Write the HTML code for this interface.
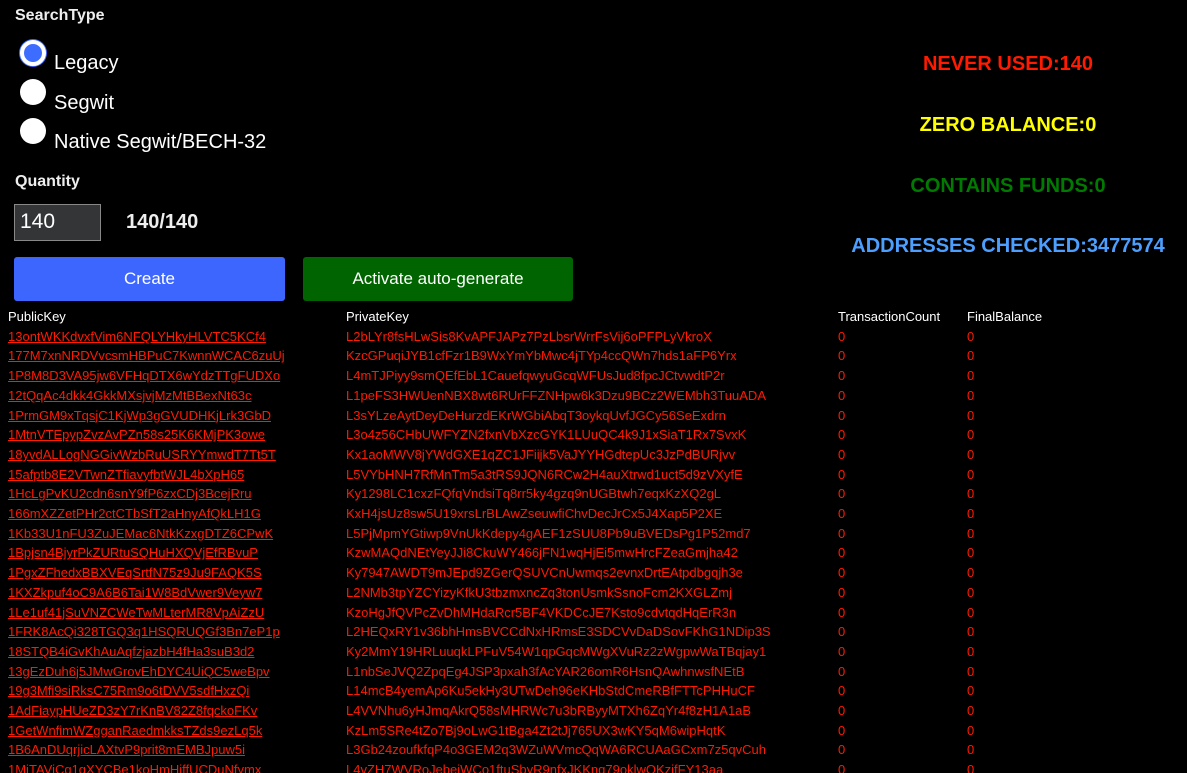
<!DOCTYPE html>
<html><head><meta charset="utf-8">
<style>
html,body{margin:0;padding:0;background:#000;width:1187px;height:773px;overflow:hidden;}
body{font-family:"Liberation Sans","DejaVu Sans",sans-serif;color:#fff;position:relative;}
.a{position:absolute;white-space:nowrap;}
.lbl{font-size:16px;font-weight:bold;color:#eee;}
.radio{position:absolute;width:26px;height:26px;border-radius:50%;background:#fff;left:20px;}
.rt{font-size:20px;color:#fff;}
.stat{position:absolute;left:830px;width:356px;text-align:center;font-size:20px;font-weight:bold;}
table{position:absolute;left:0;top:307px;border-collapse:collapse;font-size:13px;}
td,th{padding:0 0 0 8px;height:19.7px;line-height:19.7px;text-align:left;font-weight:normal;white-space:nowrap;}
th{color:#fff;}
td{color:#ff1a00;}
td a{color:#ff1a00;text-decoration:underline;}
</style></head><body>
<div class="a lbl" style="left:15px;top:7px;">SearchType</div>
<div class="radio" style="top:40px;background:#3d6dff;border:4px solid #fff;width:18px;height:18px;box-shadow:0 0 0 1px #3d6dff;"></div>
<div class="a rt" style="left:54px;top:52px;">Legacy</div>
<div class="radio" style="top:79px;"></div>
<div class="a rt" style="left:54px;top:92px;">Segwit</div>
<div class="radio" style="top:118px;"></div>
<div class="a rt" style="left:54px;top:131px;">Native Segwit/BECH-32</div>
<div class="a lbl" style="left:15px;top:173px;">Quantity</div>
<div class="a" style="left:14px;top:204px;width:85px;height:35px;background:#333537;border:1px solid #888;font-size:21px;line-height:34px;"><span style="padding-left:5px">140</span></div>
<div class="a" style="left:126px;top:211px;font-size:20px;font-weight:bold;color:#eee;">140/140</div>
<div class="a" style="left:14px;top:257px;width:271px;height:44px;background:#3d66ff;border-radius:3px;text-align:center;line-height:44px;font-size:17px;">Create</div>
<div class="a" style="left:303px;top:257px;width:270px;height:44px;background:#006400;border-radius:3px;text-align:center;line-height:44px;font-size:17px;">Activate auto-generate</div>
<div class="stat" style="top:53px;color:#ff1a00;">NEVER USED:140</div>
<div class="stat" style="top:114px;color:#ffff00;">ZERO BALANCE:0</div>
<div class="stat" style="top:175px;color:#007a00;">CONTAINS FUNDS:0</div>
<div class="stat" style="top:235px;color:#4d9fff;">ADDRESSES CHECKED:3477574</div>
<table>
<tr><th style="width:330px">PublicKey</th><th style="width:484px">PrivateKey</th><th style="width:121px">TransactionCount</th><th>FinalBalance</th></tr>
<tr><td><a>13ontWKKdvxfVim6NFQLYHkyHLVTC5KCf4</a></td><td>L2bLYr8fsHLwSis8KvAPFJAPz7PzLbsrWrrFsVij6oPFPLyVkroX</td><td>0</td><td>0</td></tr>
<tr><td><a>177M7xnNRDVvcsmHBPuC7KwnnWCAC6zuUj</a></td><td>KzcGPuqiJYB1cfFzr1B9WxYmYbMwc4jTYp4ccQWn7hds1aFP6Yrx</td><td>0</td><td>0</td></tr>
<tr><td><a>1P8M8D3VA95jw6VFHqDTX6wYdzTTgFUDXo</a></td><td>L4mTJPiyy9smQEfEbL1CauefqwyuGcqWFUsJud8fpcJCtvwdtP2r</td><td>0</td><td>0</td></tr>
<tr><td><a>12tQqAc4dkk4GkkMXsjvjMzMtBBexNt63c</a></td><td>L1peFS3HWUenNBX8wt6RUrFFZNHpw6k3Dzu9BCz2WEMbh3TuuADA</td><td>0</td><td>0</td></tr>
<tr><td><a>1PrmGM9xTqsjC1KjWp3gGVUDHKjLrk3GbD</a></td><td>L3sYLzeAytDeyDeHurzdEKrWGbiAbqT3oykqUvfJGCy56SeExdrn</td><td>0</td><td>0</td></tr>
<tr><td><a>1MtnVTEpypZvzAvPZn58s25K6KMjPK3owe</a></td><td>L3o4z56CHbUWFYZN2fxnVbXzcGYK1LUuQC4k9J1xSiaT1Rx7SvxK</td><td>0</td><td>0</td></tr>
<tr><td><a>18yvdALLogNGGivWzbRuUSRYYmwdT7Tt5T</a></td><td>Kx1aoMWV8jYWdGXE1qZC1JFiijk5VaJYYHGdtepUc3JzPdBURjvv</td><td>0</td><td>0</td></tr>
<tr><td><a>15afptb8E2VTwnZTfiavyfbtWJL4bXpH65</a></td><td>L5VYbHNH7RfMnTm5a3tRS9JQN6RCw2H4auXtrwd1uct5d9zVXyfE</td><td>0</td><td>0</td></tr>
<tr><td><a>1HcLgPvKU2cdn6snY9fP6zxCDj3BcejRru</a></td><td>Ky1298LC1cxzFQfqVndsiTq8rr5ky4gzq9nUGBtwh7eqxKzXQ2gL</td><td>0</td><td>0</td></tr>
<tr><td><a>166mXZZetPHr2ctCTbSfT2aHnyAfQkLH1G</a></td><td>KxH4jsUz8sw5U19xrsLrBLAwZseuwfiChvDecJrCx5J4Xap5P2XE</td><td>0</td><td>0</td></tr>
<tr><td><a>1Kb33U1nFU3ZuJEMac6NtkKzxgDTZ6CPwK</a></td><td>L5PjMpmYGtiwp9VnUkKdepy4gAEF1zSUU8Pb9uBVEDsPg1P52md7</td><td>0</td><td>0</td></tr>
<tr><td><a>1Bpjsn4BjyrPkZURtuSQHuHXQVjEfRBvuP</a></td><td>KzwMAQdNEtYeyJJi8CkuWY466jFN1wqHjEi5mwHrcFZeaGmjha42</td><td>0</td><td>0</td></tr>
<tr><td><a>1PgxZFhedxBBXVEqSrtfN75z9Ju9FAQK5S</a></td><td>Ky7947AWDT9mJEpd9ZGerQSUVCnUwmqs2evnxDrtEAtpdbgqjh3e</td><td>0</td><td>0</td></tr>
<tr><td><a>1KXZkpuf4oC9A6B6Tai1W8BdVwer9Veyw7</a></td><td>L2NMb3tpYZCYizyKfkU3tbzmxncZq3tonUsmkSsnoFcm2KXGLZmj</td><td>0</td><td>0</td></tr>
<tr><td><a>1Le1uf41jSuVNZCWeTwMLterMR8VpAiZzU</a></td><td>KzoHgJfQVPcZvDhMHdaRcr5BF4VKDCcJE7Ksto9cdvtqdHqErR3n</td><td>0</td><td>0</td></tr>
<tr><td><a>1FRK8AcQi328TGQ3q1HSQRUQGf3Bn7eP1p</a></td><td>L2HEQxRY1v36bhHmsBVCCdNxHRmsE3SDCVvDaDSovFKhG1NDip3S</td><td>0</td><td>0</td></tr>
<tr><td><a>18STQB4iGvKhAuAqfzjazbH4fHa3suB3d2</a></td><td>Ky2MmY19HRLuuqkLPFuV54W1qpGqcMWgXVuRz2zWgpwWaTBqjay1</td><td>0</td><td>0</td></tr>
<tr><td><a>13gEzDuh6j5JMwGrovEhDYC4UiQC5weBpv</a></td><td>L1nbSeJVQ2ZpqEg4JSP3pxah3fAcYAR26omR6HsnQAwhnwsfNEtB</td><td>0</td><td>0</td></tr>
<tr><td><a>19g3Mfi9siRksC75Rm9o6tDVV5sdfHxzQi</a></td><td>L14mcB4yemAp6Ku5ekHy3UTwDeh96eKHbStdCmeRBfFTTcPHHuCF</td><td>0</td><td>0</td></tr>
<tr><td><a>1AdFiaypHUeZD3zY7rKnBV82Z8fqckoFKv</a></td><td>L4VVNhu6yHJmqAkrQ58sMHRWc7u3bRByyMTXh6ZqYr4f8zH1A1aB</td><td>0</td><td>0</td></tr>
<tr><td><a>1GetWnfimWZgganRaedmkksTZds9ezLq5k</a></td><td>KzLm5SRe4tZo7Bj9oLwG1tBga4Zt2tJj765UX3wKY5qM6wipHqtK</td><td>0</td><td>0</td></tr>
<tr><td><a>1B6AnDUqrjicLAXtvP9prit8mEMBJpuw5i</a></td><td>L3Gb24zoufkfqP4o3GEM2q3WZuWVmcQqWA6RCUAaGCxm7z5qvCuh</td><td>0</td><td>0</td></tr>
<tr><td><a>1MiTAViCg1gXYCBe1koHmHiffUCDuNfymx</a></td><td>L4vZH7WVRoJebeiWCo1ftuSbyR9nfxJKKnq79oklwQKzifFY13aa</td><td>0</td><td>0</td></tr>
</table>
</body></html>
